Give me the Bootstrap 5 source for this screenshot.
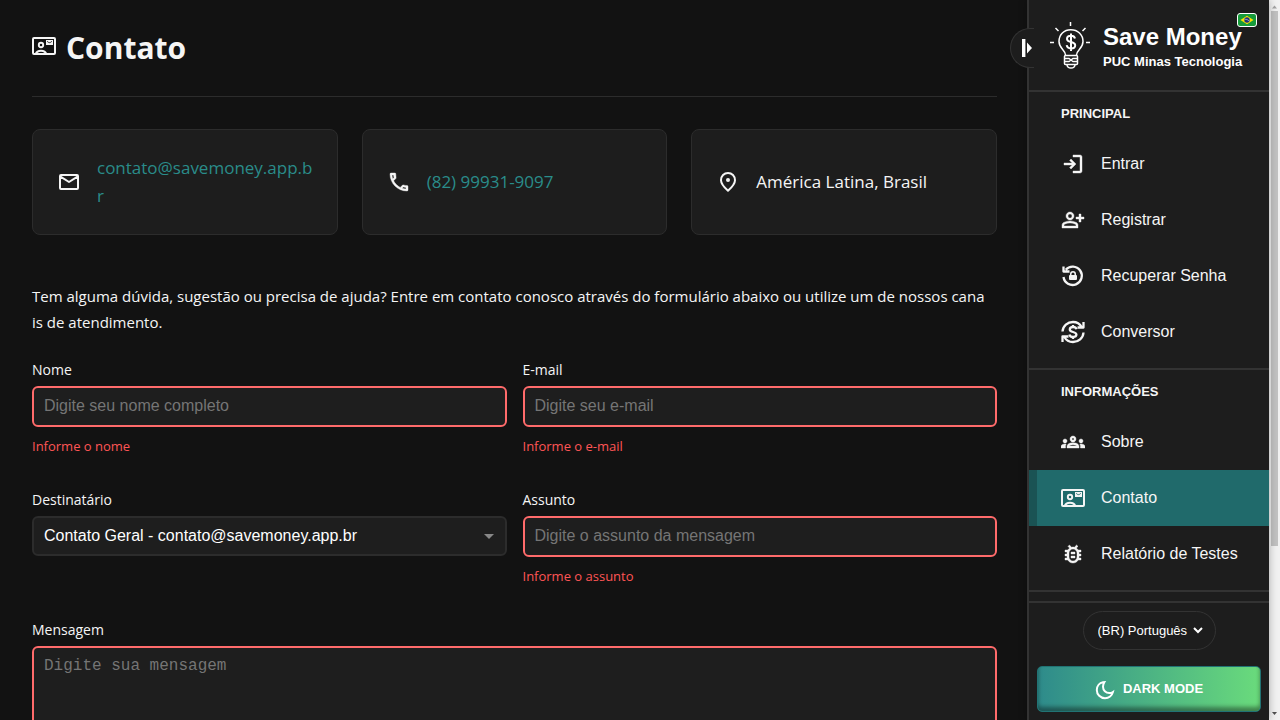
<!DOCTYPE html>
<html lang="pt-BR">
<head>
<meta charset="utf-8">
<meta name="viewport" content="width=device-width, initial-scale=1">
<title>Contato - Save Money</title>
<link href="https://cdn.jsdelivr.net/npm/bootstrap@5.3.0/dist/css/bootstrap.min.css" rel="stylesheet">
<style>
  :root { --page: #121212; --panel: #1d1d1d; --line: #333; --teal: #2a8c8a; --error: #ff6b6b; }
  body { background: var(--page); color: #f5f5f5; font-family: "Open Sans", sans-serif; }
  svg { flex-shrink: 0; display: block; }
  .content { padding: 28px 30px 32px 32px; }
  .page-head { padding-bottom: 28px; margin-bottom: 32px; border-bottom: 1px solid #2c2c2c; gap: 10px; }
  .page-head svg { margin-bottom: 4px; }
  .page-head h1 { font-size: 30px; line-height: 40px; font-weight: 700; }
  .info-card { background: var(--panel); border: 1px solid #2c2c2c; border-radius: 8px; padding: 24px; min-height: 106px; font-size: 17px; line-height: 28px; gap: 16px; overflow-wrap: anywhere; }
  .info-card a { color: var(--teal); text-decoration: none; }
  .intro { margin: 48px 0 25px; font-size: 15px; line-height: 26px; }
  .field { padding-bottom: 34px; }
  .field label { display: block; font-size: 14px; line-height: 20px; margin-bottom: 6px; }
  .field .form-control, .field .form-select { background-color: #1e1e1e; color: #fff; border: 2px solid #2c2c2c; border-radius: 6px; padding: 0 10px; height: 40px; font: 16px "Liberation Sans", sans-serif; }
  .field .form-control.is-invalid { border-color: var(--error); background-image: none; height: 41px; padding-bottom: 2px; }
  .field textarea.form-control.is-invalid { height: 160px; padding-top: 9px; font: 16px/18px "Liberation Mono", monospace; }
  .field .form-control::placeholder { color: #757575; }
  .field .form-select { background-image: url("data:image/svg+xml,%3Csvg xmlns='http://www.w3.org/2000/svg' viewBox='0 0 10 5'%3E%3Cpath fill='%23888' d='M0 0h10L5 5z'/%3E%3C/svg%3E"); background-size: 10px 5px; background-position: right 11px center; padding-bottom: 2px; }
  .field .invalid-feedback { display: block; color: #ff5555; font-size: 13px; line-height: 20px; margin-top: 9px; }

  .sidebar { width: 242px; background: var(--panel); border-left: 2px solid var(--line); box-shadow: 0 0 8px rgba(0,0,0,.3); font-family: "Liberation Sans", sans-serif; color: #f5f5f5; }
  .brand { height: 92px; border-bottom: 2px solid var(--line); padding-left: 21px; gap: 13px; }
  .brand-name { font-size: 24px; line-height: 30px; font-weight: 700; color: #fff; }
  .brand-sub { font-size: 13px; line-height: 20px; font-weight: 700; color: #fff; }
  .flag { top: 13px; right: 12px; }
  .toggle { left: -19px; top: 28px; width: 24px; height: 40px; padding: 0 2px 0 0; border: 1px solid var(--line); border-right: 0; border-radius: 20px 0 0 20px; background: var(--panel); display: flex; align-items: center; justify-content: flex-end; }
  .menu-group { border-bottom: 2px solid var(--line); padding-bottom: 8px; }
  .menu-title { font-size: 13px; line-height: 44px; font-weight: 700; padding-left: 32px; margin: 0; }
  .menu-link { display: flex; align-items: center; gap: 16px; height: 56px; padding: 0 24px; border-left: 8px solid transparent; color: #f5f5f5; font-size: 16px; text-decoration: none; white-space: nowrap; }
  .menu-link svg, .info-card svg { stroke-linejoin: round; }
  .menu-link svg[fill=currentColor], .info-card svg[fill=currentColor] { stroke: currentColor; stroke-width: .4px; }
  .menu-link.active { background: #206a6b; border-left-color: #1a5354; }
  .side-foot { border-top: 2px solid var(--line); padding: 8px; gap: 16px; }
  .lang { appearance: none; width: 133px; height: 39px; border: 1px solid var(--line); border-radius: 20px; padding: 0 14px; color: #fff; font: 13px "Liberation Sans", sans-serif; background: transparent url("data:image/svg+xml,%3Csvg xmlns='http://www.w3.org/2000/svg' viewBox='0 0 10 7'%3E%3Cpath fill='none' stroke='%23fff' stroke-width='2' d='M1 1l4 4 4-4'/%3E%3C/svg%3E") no-repeat right 12px center / 10px 7px; }
  .mode { height: 46px; border: 1px solid #217374; border-radius: 5px; padding: 0 0 2px; background: linear-gradient(90deg, #2e8b8b, #6adb7c); box-shadow: inset 0 -4px 4px rgba(0,0,0,.4); color: #fff; font: bold 13px "Liberation Sans", sans-serif; gap: 8px; }
  .scroll-rail { width: 11px; background: #f1f1f1; color: #505050; padding: 4px 2px 3px; }
  .scroll-rail i { width: 7px; flex: 0 0 75%; background: #c1c1c1; }
</style>
</head>
<body class="d-flex vh-100 overflow-hidden">

<svg width="0" height="0" class="position-absolute" aria-hidden="true">
  <symbol id="i-contact" viewBox="0 0 24 24"><path fill="none" stroke="currentColor" stroke-width="2" d="M2 4h20q1 0 1 1v14q0 1-1 1H2q-1 0-1-1V5q0-1 1-1zM3.700 20c.8-2.500 3-3.300 5.300-3.300s4.500.8 5.300 3.300"/><circle cx="9" cy="11" r="2.200" fill="none" stroke="currentColor" stroke-width="1.900"/><path fill="currentColor" fill-rule="evenodd" d="M14 6h7v5h-7zM15 7v.7l2.500 1.600L20 7.700V7l-2.500 1.500z"/></symbol>
</svg>

<main class="content flex-grow-1 overflow-hidden">
  <header class="page-head d-flex align-items-center">
    <svg width="24" height="24"><use href="#i-contact"/></svg>
    <h1 class="m-0">Contato</h1>
  </header>

  <section class="row g-4">
    <div class="col-4"><div class="info-card d-flex align-items-center h-100">
      <svg width="24" height="24" viewBox="0 0 24 24" fill="none" stroke="currentColor" stroke-width="2"><path d="M4 5h16q1 0 1 1v12q0 1-1 1H4q-1 0-1-1V6q0-1 1-1zM3.500 6.700 12 12l8.500-5.300"/></svg>
      <a href="mailto:contato@savemoney.app.br">contato@savemoney.app.br</a>
    </div></div>
    <div class="col-4"><div class="info-card d-flex align-items-center h-100">
      <svg width="24" height="24" viewBox="0 0 24 24" fill="currentColor"><path d="M6.540 5c.06.89.21 1.760.45 2.590l-1.200 1.200c-.41-1.200-.67-2.470-.76-3.790h1.510m9.860 12.020c.85.24 1.720.39 2.600.45v1.490c-1.320-.09-2.590-.35-3.800-.75l1.200-1.190M8 3H4c-.55 0-1 .45-1 1 0 9.390 7.610 17 17 17 .55 0 1-.45 1-1v-3.490c0-.55-.45-1-1-1-1.240 0-2.450-.2-3.570-.57-.1-.04-.21-.05-.31-.05-.26 0-.51.1-.71.29l-2.200 2.200c-2.830-1.450-5.150-3.760-6.590-6.590l2.200-2.200c.28-.28.36-.67.25-1.020C9 6.450 8.800 5.250 8.800 4c0-.55-.45-1-.8-1z"/></svg>
      <a href="tel:+5582999319097">(82) 99931-9097</a>
    </div></div>
    <div class="col-4"><div class="info-card d-flex align-items-center h-100">
      <svg width="24" height="24" viewBox="0 0 24 24"><path fill="none" stroke="currentColor" stroke-width="2" d="M12 20.700C7.500 16.700 5 13.300 5 10.200 5 6 8.100 3 12 3s7 3 7 7.200c0 3.100-2.500 6.500-7 10.500z"/><circle cx="12" cy="10" r="2" fill="currentColor"/></svg>
      <span>América Latina, Brasil</span>
    </div></div>
  </section>

  <p class="intro">Tem alguma dúvida, sugestão ou precisa de ajuda? Entre em contato conosco através do formulário abaixo ou utilize um de nossos cana<br>is de atendimento.</p>

  <form class="row gx-3" novalidate>
    <div class="col-6 field">
      <label for="nome">Nome</label>
      <input id="nome" type="text" class="form-control is-invalid" placeholder="Digite seu nome completo">
      <div class="invalid-feedback">Informe o nome</div>
    </div>
    <div class="col-6 field">
      <label for="email">E-mail</label>
      <input id="email" type="email" class="form-control is-invalid" placeholder="Digite seu e-mail">
      <div class="invalid-feedback">Informe o e-mail</div>
    </div>
    <div class="col-6 field">
      <label for="dest">Destinatário</label>
      <select id="dest" class="form-select"><option>Contato Geral - contato@savemoney.app.br</option></select>
    </div>
    <div class="col-6 field">
      <label for="assunto">Assunto</label>
      <input id="assunto" type="text" class="form-control is-invalid" placeholder="Digite o assunto da mensagem">
      <div class="invalid-feedback">Informe o assunto</div>
    </div>
    <div class="col-12 field">
      <label for="msg">Mensagem</label>
      <textarea id="msg" class="form-control is-invalid" placeholder="Digite sua mensagem"></textarea>
    </div>
  </form>
</main>

<aside class="sidebar d-flex flex-column flex-shrink-0 position-relative">
  <button type="button" class="toggle position-absolute" aria-label="Recolher menu">
    <svg width="10" height="18" viewBox="0 0 10 18"><path fill="#fff" d="M0 0h3v18H0zM5 3.500 10 9l-5 5.500z"/><path fill="#777" d="M3 0h1v18H3z"/></svg>
  </button>
  <div class="brand d-flex align-items-center position-relative">
    <svg width="40" height="48" viewBox="0 0 40 48" fill="none" stroke="#fff" stroke-width="1.500">
      <path d="M20.500 1v4M5.500 7l3 3M35.500 7l-3 3M0 21.500h4M36 21.500h4"/>
      <path d="M15.500 34c0-5-6.500-6.500-6.500-13.500C9 13.500 14 8.800 20.800 8.800S33 13.500 33 20.500C33 27.500 26.500 29 26.500 34"/>
      <rect x="14.500" y="34.500" width="13" height="9" rx="1"/>
      <path d="M15 37.500h4l4 3h4M15 40.500h4l4-3h4M17 44c.5 4 7.500 4 8 0"/>
      <path stroke-width="2" d="M25 17.500c-.5-2-2-2.700-4-2.700-2.300 0-4 1-4 3.100 0 4.200 8.200 2 8.200 6.300 0 2.200-1.900 3.200-4.200 3.200-2.200 0-4-1-4.300-3.200M21 12.500v17.500"/>
    </svg>
    <div class="pt-1">
      <div class="brand-name">Save Money</div>
      <div class="brand-sub">PUC Minas Tecnologia</div>
    </div>
    <svg class="flag position-absolute" width="20" height="14" viewBox="0 0 20 14"><rect x=".5" y=".5" width="19" height="13" rx="2.500" fill="#169b3a" stroke="#fff"/><path fill="#fedf00" d="M10 2.800 16.500 7 10 11.200 3.500 7z"/><circle cx="10" cy="7" r="2.700" fill="#20347c"/><path stroke="#b8c4dd" stroke-width=".7" fill="none" d="M7.600 6.200q2.700-.2 4.700 1.800"/></svg>
  </div>

  <nav>
    <div class="menu-group">
      <h2 class="menu-title">PRINCIPAL</h2>
      <a class="menu-link" href="#"><svg width="24" height="24" viewBox="0 0 24 24" fill="currentColor"><path d="M12 21v-2h7V5h-7V3h7c1.100 0 2 .9 2 2v14c0 1.100-.9 2-2 2h-7zm-2-4-1.400-1.450L11.150 13H3v-2h8.150L8.600 8.450 10 7l5 5-5 5z"/></svg>Entrar</a>
      <a class="menu-link" href="#"><svg width="24" height="24" viewBox="0 0 24 24" fill="currentColor"><path d="M18 14v-3h-3V9h3V6h2v3h3v2h-3v3h-2Zm-9-2q-1.650 0-2.825-1.175Q5 9.650 5 8t1.175-2.825Q7.350 4 9 4t2.825 1.175Q13 6.350 13 8t-1.175 2.825Q10.650 12 9 12Zm-8 8v-2.800q0-.85.438-1.563.437-.712 1.162-1.087 1.550-.775 3.150-1.163Q7.350 13 9 13t3.250.387q1.600.388 3.150 1.163.725.375 1.162 1.087Q17 16.350 17 17.200V20Zm2-2h12v-.8q0-.275-.137-.5-.138-.225-.363-.35-1.350-.675-2.725-1.013Q10.400 15 9 15t-2.775.337Q4.850 15.675 3.500 16.350q-.225.125-.362.35-.138.225-.138.5Zm6-8q.825 0 1.413-.588Q11 8.825 11 8t-.587-1.412Q9.825 6 9 6q-.825 0-1.412.588Q7 7.175 7 8t.588 1.412Q8.175 10 9 10Z"/></svg>Registrar</a>
      <a class="menu-link" href="#"><svg width="24" height="24" viewBox="0 0 24 24"><path fill="none" stroke="currentColor" stroke-width="2.300" d="M2.500 13a9.200 9.200 0 1 0 2.200-7.300M2.500 2.500V7.500H8.500"/><path fill="currentColor" fill-rule="evenodd" d="M9 16q-1 0-1-1v-3q0-1 1-1v-1a3 3 0 0 1 6 0v1q1 0 1 1v3q0 1-1 1zM10.500 11h3v-1a1.500 1.500 0 0 0-3 0z"/></svg>Recuperar Senha</a>
      <a class="menu-link" href="#"><svg width="24" height="24" viewBox="0 0 24 24" fill="none" stroke="currentColor" stroke-width="2.300"><path d="M1.500 11.500C1.800 6 6.600 2 12 2c3.800 0 7 2 8.700 5M22.500 12.500C22.200 18 17.400 22 12 22c-3.800 0-7-2-8.700-5M22.500 2v5.500h-6M1.500 22v-5.500h6"/><path d="M15.500 9.200C15 7.500 13.800 7 12.100 7 10.200 7 8.800 7.900 8.800 9.500c0 3.400 6.600 1.600 6.600 5.100 0 1.600-1.500 2.400-3.300 2.400-2 0-3.300-.8-3.700-2.600M12 5v2.500M12 16.500V19"/></svg>Conversor</a>
    </div>
    <div class="menu-group">
      <h2 class="menu-title">INFORMAÇÕES</h2>
      <a class="menu-link" href="#"><svg width="24" height="24" viewBox="0 0 24 24" fill="currentColor"><path d="M0 18v-1.575q0-1.075 1.100-1.750Q2.200 14 4 14q.325 0 .625.013.3.012.575.062-.35.525-.525 1.100-.175.575-.175 1.200V18Zm6 0v-1.625q0-.8.438-1.463.437-.662 1.237-1.162T9.588 13q1.112-.25 2.412-.25 1.325 0 2.438.25 1.112.25 1.912.75t1.225 1.162Q18 15.575 18 16.375V18Zm13.500 0v-1.625q0-.65-.162-1.225-.163-.575-.488-1.075.275-.05.563-.062Q19.700 14 20 14q1.800 0 2.900.662 1.100.663 1.100 1.763V18ZM8.125 16H15.900q-.25-.5-1.388-.875-1.137-.375-2.512-.375t-2.512.375Q8.350 15.500 8.125 16ZM4 13q-.825 0-1.412-.588Q2 11.825 2 11q0-.85.588-1.425Q3.175 9 4 9q.85 0 1.425.575Q6 10.150 6 11q0 .825-.575 1.412Q4.850 13 4 13Zm16 0q-.825 0-1.413-.588Q18 11.825 18 11q0-.85.587-1.425Q19.175 9 20 9q.85 0 1.425.575Q22 10.150 22 11q0 .825-.575 1.412Q20.850 13 20 13Zm-8-1q-1.250 0-2.125-.875T9 9q0-1.275.875-2.138Q10.750 6 12 6q1.275 0 2.137.862Q15 7.725 15 9q0 1.250-.863 2.125Q13.275 12 12 12Zm0-2q.425 0 .713-.288Q13 9.425 13 9t-.287-.713Q12.425 8 12 8t-.712.287Q11 8.575 11 9t.288.712Q11.575 10 12 10Z"/></svg>Sobre</a>
      <a class="menu-link active" href="#" aria-current="page"><svg width="24" height="24"><use href="#i-contact"/></svg>Contato</a>
      <a class="menu-link" href="#"><svg width="24" height="24" viewBox="0 0 24 24" fill="currentColor"><path d="M20 8h-2.810c-.45-.78-1.070-1.450-1.820-1.960L17 4.410 15.590 3l-2.170 2.170C12.960 5.060 12.490 5 12 5s-.96.06-1.410.17L8.410 3 7 4.410l1.620 1.630C7.880 6.550 7.260 7.220 6.810 8H4v2h2.090c-.05.33-.09.66-.09 1v1H4v2h2v1c0 .34.04.67.09 1H4v2h2.810c1.040 1.790 2.970 3 5.190 3s4.150-1.210 5.190-3H20v-2h-2.090c.05-.33.09-.66.09-1v-1h2v-2h-2v-1c0-.34-.04-.67-.09-1H20V8zm-4 7c0 2.200-1.800 4-4 4s-4-1.800-4-4v-4c0-2.200 1.800-4 4-4s4 1.800 4 4v4zm-6-1h4v2h-4zm0-4h4v2h-4z"/></svg>Relatório de Testes</a>
    </div>
  </nav>

  <div class="side-foot mt-auto d-flex flex-column">
    <select class="lang align-self-center" aria-label="Idioma"><option>(BR) Português</option></select>
    <button type="button" class="mode d-flex align-items-center justify-content-center">
      <svg class="mt-1" width="20" height="20" viewBox="0 0 20 20" fill="none" stroke="#fff" stroke-width="2"><path d="M8 2.300C4.500 3 1.800 6.100 1.800 10c0 4.500 3.600 8.200 8.200 8.200 3.800 0 7-2.600 7.900-6.200-1.300.8-2.300 1-3.500 1C10.800 13 8 10.300 8 6.800c0-1.600.3-3 1.300-4.600z"/></svg>
      DARK MODE
    </button>
  </div>
</aside>

<div class="scroll-rail d-flex flex-column align-items-center flex-shrink-0" aria-hidden="true">
  <svg width="7" height="7" viewBox="0 0 7 7"><path fill="#a3a3a3" d="M1 4.500 3.500 1.500 6 4.500z"/></svg>
  <i></i>
  <svg class="mt-auto" width="7" height="7" viewBox="0 0 7 7"><path fill="currentColor" d="M1 2 3.500 5 6 2z"/></svg>
</div>

<script src="https://cdn.jsdelivr.net/npm/bootstrap@5.3.0/dist/js/bootstrap.bundle.min.js"></script>
</body>
</html>
